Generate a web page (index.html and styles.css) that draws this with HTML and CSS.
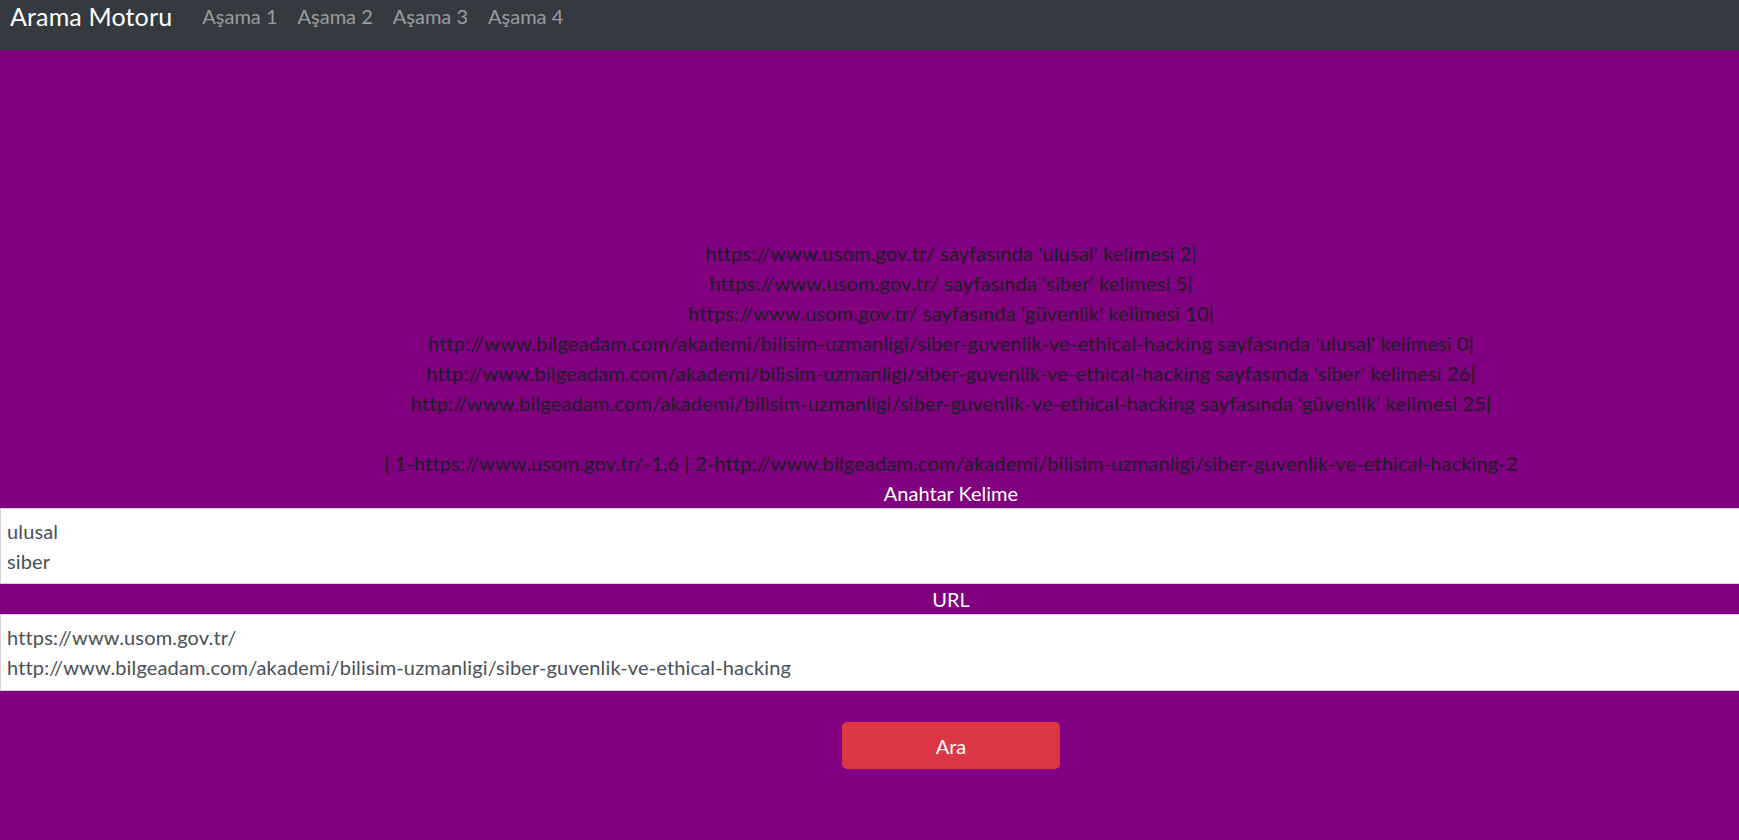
FILE: index.html
```html
<!DOCTYPE html>
<html lang="tr">
<head>
<meta charset="utf-8">
<title>Arama Motoru</title>
<link rel="stylesheet" href="styles.css">
</head>
<body>
<nav class="navbar">
  <a class="brand" href="#">Arama Motoru</a>
  <ul class="nav">
    <li><a class="nav-link" href="#">Aşama 1</a></li>
    <li><a class="nav-link" href="#">Aşama 2</a></li>
    <li><a class="nav-link" href="#">Aşama 3</a></li>
    <li><a class="nav-link" href="#">Aşama 4</a></li>
  </ul>
</nav>
<main class="page">
  <div class="results">
    <div class="line">https://www.usom.gov.tr/ sayfasında 'ulusal' kelimesi 2|</div>
    <div class="line">https://www.usom.gov.tr/ sayfasında 'siber' kelimesi 5|</div>
    <div class="line">https://www.usom.gov.tr/ sayfasında 'güvenlik' kelimesi 10|</div>
    <div class="line">http://www.bilgeadam.com/akademi/bilisim-uzmanligi/siber-guvenlik-ve-ethical-hacking sayfasında 'ulusal' kelimesi 0|</div>
    <div class="line">http://www.bilgeadam.com/akademi/bilisim-uzmanligi/siber-guvenlik-ve-ethical-hacking sayfasında 'siber' kelimesi 26|</div>
    <div class="line">http://www.bilgeadam.com/akademi/bilisim-uzmanligi/siber-guvenlik-ve-ethical-hacking sayfasında 'güvenlik' kelimesi 25|</div>
    <div class="line blank"></div>
    <div class="line">| 1-https://www.usom.gov.tr/-1,6 | 2-http://www.bilgeadam.com/akademi/bilisim-uzmanligi/siber-guvenlik-ve-ethical-hacking-2</div>
  </div>
  <label class="field-label" for="kelime">Anahtar Kelime</label>
  <textarea id="kelime" class="field field-first" rows="2">ulusal
siber</textarea>
  <label class="field-label" for="url">URL</label>
  <textarea id="url" class="field" rows="2">https://www.usom.gov.tr/
http://www.bilgeadam.com/akademi/bilisim-uzmanligi/siber-guvenlik-ve-ethical-hacking</textarea>
  <div class="actions">
    <button class="btn-search" type="button">Ara</button>
  </div>
</main>
</body>
</html>
```

FILE: styles.css
```css
html {
  background: #800080;
  overflow: hidden;
}
body {
  margin: 0;
  font-family: "Lato", "Liberation Sans", sans-serif;
  color: #212529;
  background: #800080;
}
.navbar {
  display: flex;
  align-items: flex-start;
  height: 50px;
  box-sizing: border-box;
  background: #343a40;
  padding: 0 0 0 10px;
}
.brand {
  font-size: 25px;
  line-height: 30px;
  margin-top: 1px;
  color: #fff;
  text-decoration: none;
  letter-spacing: 0.15px;
  margin-right: 20px;
}
.nav {
  display: flex;
  list-style: none;
  margin: 0;
  padding: 0;
}
.nav-link {
  display: block;
  font-size: 20px;
  line-height: 30px;
  margin-top: 1px;
  padding: 0 10px;
  color: #9a9da0;
  text-decoration: none;
}
.page {
  width: 1902px;
  padding-top: 188px;
}
.results {
  text-align: center;
  font-size: 20px;
  line-height: 30px;
  letter-spacing: 0.15px;
  color: #1c1f23;
}
.line.blank {
  height: 30px;
}
.field-label {
  display: block;
  text-align: center;
  color: #fff;
  font-size: 20px;
  line-height: 30px;
}
.field {
  display: block;
  width: 100%;
  box-sizing: border-box;
  height: 77px;
  margin: 0;
  padding: 7px 6px 8px;
  border: 1px solid #ced4da;
  border-radius: 0;
  background: #fff;
  color: #495057;
  font-family: "Lato", "Liberation Sans", sans-serif;
  font-size: 20px;
  line-height: 30px;
  letter-spacing: 0.15px;
  resize: none;
  overflow: hidden;
}
.field-first {
  height: 76px;
  padding-bottom: 7px;
}
.actions {
  display: flex;
  justify-content: center;
  padding-top: 31px;
}
.btn-search {
  width: 218px;
  height: 47px;
  border: none;
  border-radius: 5px;
  background: #dc3545;
  color: #fff;
  font-family: "Lato", "Liberation Sans", sans-serif;
  font-size: 20px;
  line-height: 30px;
  cursor: pointer;
}
```
